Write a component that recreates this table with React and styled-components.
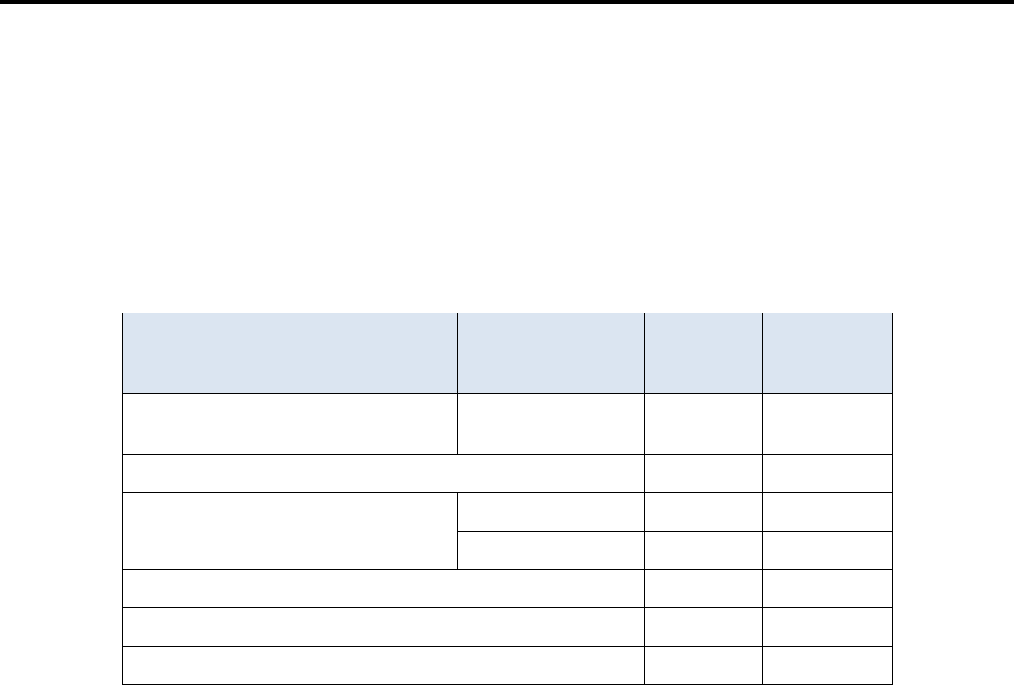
import styled, { createGlobalStyle } from "styled-components";

const GlobalStyle = createGlobalStyle`
  html, body {
    margin: 0;
    padding: 0;
    background: #ffffff;
    font-family: "Liberation Sans", Arial, sans-serif;
  }
`;

const Page = styled.div`
  width: 1014px;
  height: 685px;
  overflow: hidden;
  display: flex;
  flex-direction: column;
`;

const TopRule = styled.div`
  height: 4px;
  background: #000;
`;

const Body = styled.div`
  padding: 309px 0 0 122px;
`;

const Grid = styled.table`
  border-collapse: collapse;
  table-layout: fixed;
  width: 770px;

  td, th {
    border: 1px solid #000;
    padding: 0;
  }
`;

const HeadCell = styled.th`
  background: #dbe5f1;
  border-top: none !important;
  height: 80px;
`;

const Row = styled.tr`
  height: ${(p) => p.$h}px;
`;

const widths = [335, 187, 118, 130];

const App = () => (
  <Page>
    <GlobalStyle />
    <TopRule />
    <Body>
      <Grid>
        <colgroup>
          {widths.map((w, i) => (
            <col key={i} style={{ width: w }} />
          ))}
        </colgroup>
        <thead>
          <tr>
            <HeadCell />
            <HeadCell />
            <HeadCell />
            <HeadCell />
          </tr>
        </thead>
        <tbody>
          <Row $h={61}>
            <td />
            <td />
            <td />
            <td />
          </Row>
          <Row $h={38}>
            <td colSpan={2} />
            <td />
            <td />
          </Row>
          <Row $h={39}>
            <td rowSpan={2} />
            <td />
            <td />
            <td />
          </Row>
          <Row $h={38}>
            <td />
            <td />
            <td />
          </Row>
          <Row $h={38}>
            <td colSpan={2} />
            <td />
            <td />
          </Row>
          <Row $h={39}>
            <td colSpan={2} />
            <td />
            <td />
          </Row>
          <Row $h={38}>
            <td colSpan={2} />
            <td />
            <td />
          </Row>
        </tbody>
      </Grid>
    </Body>
  </Page>
);

export default App;
